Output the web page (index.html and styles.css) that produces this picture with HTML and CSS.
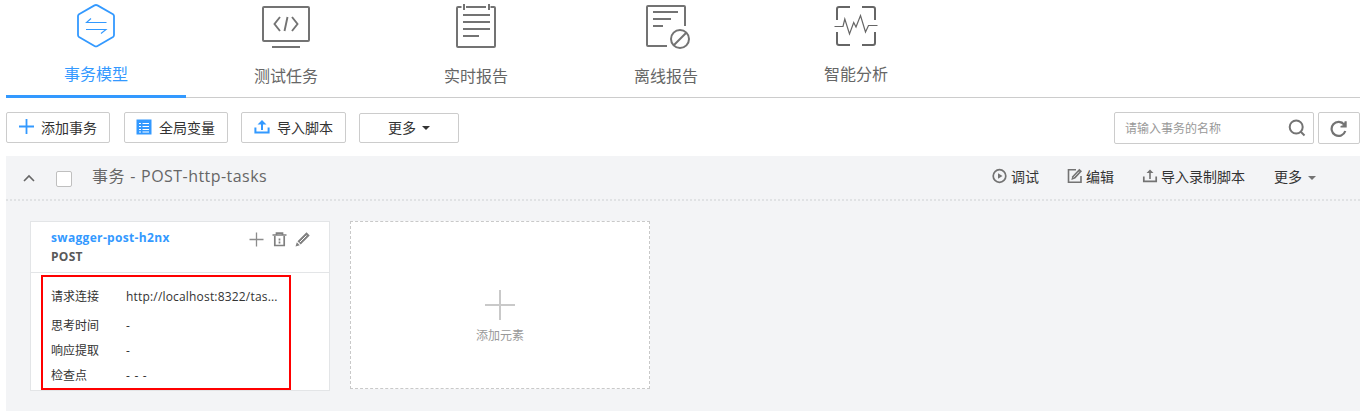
FILE: index.html
```html
<!DOCTYPE html>
<html lang="zh-CN">
<head>
<meta charset="utf-8">
<title>事务模型</title>
<link rel="stylesheet" href="styles.css">
</head>
<body>
<nav class="tabs">
  <a class="tab tab-active">
    <svg class="tab-icon" width="48" height="52" viewBox="0 0 48 52" fill="none" stroke="#3399ff" stroke-width="1.8" stroke-linejoin="round"><path d="M22.500 5.400Q24 4.600 25.500 5.400L41 14.200Q42 15 42 16V35Q42 36.300 41 37L25.500 46Q24 46.800 22.500 46L7 37Q6 36.300 6 35V16Q6 15 7 14.200Z"/><path d="M34.500 22.500H14.500L19 18.500M14 29.500H34L29 33.500" stroke-width="1.100" stroke-linejoin="miter"/></svg>
    <span class="tab-label">事务模型</span>
  </a>
  <a class="tab tab-low">
    <svg class="tab-icon" width="48" height="52" viewBox="0 0 48 52" fill="none" stroke="#737373" stroke-width="2"><rect x="1" y="7" width="46" height="34" rx="1"/><path d="M10 47H38"/><path d="M18 17L12.500 24L18 31M30 17L35.500 24L30 31M25.500 17L22.500 31" stroke-width="1.900"/></svg>
    <span class="tab-label">测试任务</span>
  </a>
  <a class="tab tab-low">
    <svg class="tab-icon" width="48" height="52" viewBox="0 0 48 52" fill="none" stroke="#737373" stroke-width="2"><path d="M9.500 7H6Q5 7 5 8V46Q5 47 6 47H42Q43 47 43 46V8Q43 7 42 7H38.500M14 7H34M12 4V10M37 4V10M11 15H38M11 22H38M11 29H38M11 36H27"/></svg>
    <span class="tab-label">实时报告</span>
  </a>
  <a class="tab tab-low">
    <svg class="tab-icon" width="48" height="52" viewBox="0 0 48 52" fill="none" stroke="#737373" stroke-width="2"><path d="M43 26V7Q43 6 42 6H6Q5 6 5 7V45Q5 46 6 46H25M11 12H36M11 19H29M11 26H21"/><circle cx="38" cy="39" r="9"/><path d="M31.500 45.500L44.500 32.500"/></svg>
    <span class="tab-label">离线报告</span>
  </a>
  <a class="tab">
    <svg class="tab-icon" width="48" height="52" viewBox="0 0 48 52" fill="none" stroke="#666" stroke-width="2"><path d="M5 20V9Q5 7 7 7H18M30 7H41Q43 7 43 9V20M43 32V43Q43 45 41 45H30M18 45H7Q5 45 5 43V32"/><path d="M2.500 26.500H11L12.800 19L17.500 34L21.700 22.500L24 27L28.500 15.500L33.500 32L36.500 25.500H45.500" stroke-width="1.200"/></svg>
    <span class="tab-label">智能分析</span>
  </a>
</nav>

<div class="toolbar">
  <button class="btn btn-add"><svg width="16" height="16" viewBox="0 0 16 16" stroke="#3399ff" stroke-width="1.800"><path d="M0 7.500H15M7.500 0V15"/></svg><span>添加事务</span></button>
  <button class="btn btn-vars"><svg width="16" height="16" viewBox="0 0 16 16"><path d="M.5 .5H15.500V15.500H.5Z" fill="#3399ff"/><path d="M3 4.500H5M6.500 4.500H13M3 7.500H5M6.500 7.500H13M3 10.500H5M6.500 10.500H13M3 13H5M6.500 13H13" stroke="#fff" stroke-width="1.100"/></svg><span>全局变量</span></button>
  <button class="btn btn-import"><svg width="16" height="16" viewBox="0 0 16 16"><path d="M1.400 8.500V13.500H14.600V8.500" fill="none" stroke="#3399ff" stroke-width="2"/><path d="M8 1L12.500 5.500H9V11H7V5.500H3.500Z" fill="#3399ff"/></svg><span>导入脚本</span></button>
  <button class="btn btn-more"><span>更多</span><i class="caret"></i></button>
  <div class="search">
    <span class="search-hint">请输入事务的名称</span>
    <svg width="18" height="18" viewBox="0 0 18 18" fill="none" stroke="#737373" stroke-width="2"><circle cx="8.200" cy="8" r="6.500"/><path d="M12.500 12.500L16.500 16.500"/></svg>
  </div>
  <button class="btn refresh"><svg width="18" height="18" viewBox="0 0 18 18"><path d="M14.200 4.700A7 7 0 1 0 15.300 11" fill="none" stroke="#737373" stroke-width="2.200"/><path d="M16.700 1.300V7.500H10.500V6L13.500 5L14.700 1.300Z" fill="#737373"/></svg></button>
</div>

<section class="panel">
  <header class="panel-head">
    <svg class="collapse" width="12" height="8" viewBox="0 0 12 8" fill="none" stroke="#666" stroke-width="1.600"><path d="M1 7L6 2L11 7"/></svg>
    <span class="checkbox"></span>
    <h1 class="panel-title">事务 - POST-http-tasks</h1>
    <div class="actions">
      <a class="action debug"><svg width="16" height="16" viewBox="0 0 16 16"><circle cx="7.500" cy="8" r="6.300" fill="none" stroke="#737373" stroke-width="1.700"/><path d="M6 5.200L10.500 8L6 10.800Z" fill="#737373"/></svg>调试</a>
      <a class="action edit"><svg width="16" height="16" viewBox="0 0 16 16"><path d="M9 1.800H1.500V14.200H14V8" fill="none" stroke="#737373" stroke-width="1.600"/><path d="M12.300 .8L15 3.300L8.300 10.600L4.300 12L5.300 8.200Z" fill="#737373"/><path d="M6.500 9.500L12 3.700" stroke="#f3f4f6" stroke-width=".8"/></svg>编辑</a>
      <a class="action record"><svg width="16" height="16" viewBox="0 0 16 16"><path d="M1.800 8.500V13.300H14.200V8.500" fill="none" stroke="#737373" stroke-width="1.700"/><path d="M8 1.500L11.500 5H8.800V11H7.200V5H4.500Z" fill="#737373"/></svg>导入录制脚本</a>
      <a class="action">更多<i class="caret caret-gray"></i></a>
    </div>
  </header>
  <div class="cards">
    <article class="card">
      <div class="card-head">
        <div>
          <div class="card-name">swagger-post-h2nx</div>
          <div class="card-method">POST</div>
        </div>
        <div class="card-tools">
          <svg width="15" height="15" viewBox="0 0 15 15" stroke="#8c8c8c" stroke-width="1.300"><path d="M.5 7.500H14.500M7.500 .5V14.500"/></svg>
          <svg width="15" height="15" viewBox="0 0 15 15" fill="none" stroke="#808080" stroke-width="1.700"><path d="M.5 3H14.500M4.500 3V1.200H10.500V3M2.800 4V13.500H12.200V4M7.500 6.500V8.500M7.500 9.500V11.500"/></svg>
          <svg width="15" height="15" viewBox="0 0 15 15"><path d="M11.500 .3L14.700 3.500L5.700 12.500L2.500 9.300ZM1.800 10.200L4.800 13.200L.5 14.500Z" fill="#808080"/><path d="M4.800 10.200L11.500 3.500" stroke="#fff" stroke-width="1"/></svg>
        </div>
      </div>
      <dl class="details">
        <div class="row row-first"><dt>请求连接</dt><dd>http://localhost:8322/tas...</dd></div>
        <div class="row"><dt>思考时间</dt><dd>-</dd></div>
        <div class="row"><dt>响应提取</dt><dd>-</dd></div>
        <div class="row"><dt>检查点</dt><dd class="checks">- - -</dd></div>
      </dl>
    </article>
    <div class="add-card">
      <svg width="32" height="32" viewBox="0 0 32 32" stroke="#c9c9c9" stroke-width="2"><path d="M1 16H31M16 1V31"/></svg>
      <span>添加元素</span>
    </div>
  </div>
</section>
</body>
</html>
```
FILE: styles.css
```css
* { box-sizing: border-box; }
body { margin: 0; padding: 0 5px 0 6px; height: 414px; overflow: hidden; background: #fff; color: #333; font: 14px/20px "Open Sans", "Noto Sans CJK SC", sans-serif; }
svg { display: block; flex: none; }

.tabs { display: flex; gap: 10px; height: 98px; border-bottom: 1px solid #ccc; }
.tab { display: flex; flex-direction: column; align-items: center; width: 180px; height: 98px; color: #666; }
.tab-label { margin-top: 10px; font-size: 16px; line-height: 24px; }
.tab-low .tab-label { margin-top: 12px; }
.tab-active { color: #39f; border-bottom: 3px solid #39f; }

.toolbar { display: flex; align-items: flex-start; height: 58px; padding-top: 14px; }
.btn { display: flex; align-items: center; height: 31px; padding: 0 0 0 12px; border: 1px solid #ccc; border-radius: 2px; background: #fff; color: #333; font: inherit; white-space: nowrap; }
.btn-add { width: 104px; gap: 6px; margin-right: 14px; }
.btn-vars { width: 104px; gap: 7px; padding-left: 11px; margin-right: 13px; }
.btn-import { width: 105px; gap: 7px; margin-right: 13px; }
.btn-more { width: 100px; height: 30px; margin-top: 1px; padding-left: 28px; gap: 6px; }
.btn svg { margin-bottom: 1px; }
.caret { border: 4px solid transparent; border-top: 4px solid #333; border-bottom: 0; }
.search { display: flex; align-items: center; justify-content: space-between; width: 200px; height: 32px; margin-left: auto; padding: 0 7px 0 10px; border: 1px solid #ccc; border-radius: 2px; }
.search-hint { padding-top: 2px; color: #999; font-size: 12px; }
.refresh { width: 42px; height: 32px; margin-left: 4px; padding-left: 11px; }
.refresh svg { margin: 2px 0 0; }

.panel { height: 255px; background: #f3f4f6; }
.panel-head { display: flex; align-items: center; height: 45px; padding: 0 44px 2px 17px; border-bottom: 2px dotted #e0e2e4; }
.collapse { margin-top: 2px; }
.checkbox { width: 16px; height: 16px; margin: 4px 20px 0 21px; border: 1px solid #bfbfbf; border-radius: 2px; background: #fff; }
.panel-title { margin: 0 0 2px; color: #666; font-size: 16px; font-weight: 400; line-height: 24px; letter-spacing: .45px; word-spacing: .7px; }
.actions { display: flex; margin-left: auto; }
.action { display: flex; align-items: center; gap: 3px; }
.action svg { margin-bottom: 2px; }
.debug, .edit { margin-right: 28px; }
.record { margin-right: 29px; }
.caret-gray { margin: 3px 0 0 3px; border-top-color: #737373; }

.cards { display: flex; align-items: flex-start; gap: 20px; padding: 20px 24px; font-size: 12px; }
.card { width: 300px; height: 170px; border: 1px solid #e3e5e7; background: #fff; }
.card-head { display: flex; justify-content: space-between; height: 51px; padding: 6px 19px 0 20px; border-bottom: 1px solid #e3e5e7; font-weight: 700; line-height: 19px; }
.card-name { color: #39f; letter-spacing: .33px; }
.card-method { color: #595959; letter-spacing: .3px; }
.card-tools { display: flex; gap: 8px; padding-top: 4px; }
.details { width: 250px; height: 115px; margin: 2px 0 0 10px; padding: 7px 0 0 8px; border: 2px solid #f00; }
.row { display: flex; height: 25px; line-height: 25px; }
.row-first { height: 29px; }
.row dt { width: 75px; }
.row dd { margin: 0; letter-spacing: .18px; }
.row .checks { letter-spacing: .7px; }
.add-card { display: flex; flex-direction: column; align-items: center; width: 300px; height: 168px; padding-top: 67px; border: 1px dashed #c9c9c9; background: #fff; color: #999; }
.add-card span { margin-top: 5px; }
```
